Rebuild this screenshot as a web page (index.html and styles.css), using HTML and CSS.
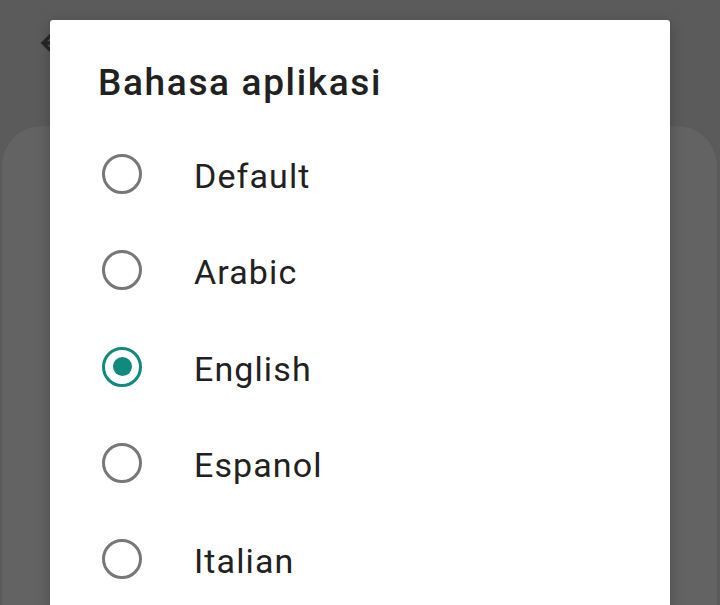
FILE: index.html
```html
<!DOCTYPE html>
<html lang="id">
<head>
<meta charset="utf-8">
<title>Bahasa aplikasi</title>
<link rel="stylesheet" href="styles.css">
</head>
<body>
<div class="screen">
  <div class="appbar">
    <svg class="back" width="40" height="40" viewBox="0 0 24 24"><path d="M20 11H7.83l5.59-5.59L12 4l-8 8 8 8 1.41-1.41L7.83 13H20v-2z" fill="#262626"/></svg>
  </div>
  <div class="card"></div>
</div>
<div class="dialog">
  <h1 class="title">Bahasa aplikasi</h1>
  <ul class="options">
    <li class="option"><span class="radio"></span><span class="label">Default</span></li>
    <li class="option"><span class="radio"></span><span class="label">Arabic</span></li>
    <li class="option"><span class="radio checked"></span><span class="label">English</span></li>
    <li class="option"><span class="radio"></span><span class="label">Espanol</span></li>
    <li class="option"><span class="radio"></span><span class="label">Italian</span></li>
  </ul>
</div>
</body>
</html>
```
FILE: styles.css
```css
html, body {
  margin: 0;
  padding: 0;
  width: 720px;
  height: 605px;
  overflow: hidden;
  background: #5b5b5b;
  font-family: Roboto, "Noto Sans", sans-serif;
}
.screen {
  display: flex;
  flex-direction: column;
  height: 605px;
}
.appbar {
  height: 125px;
  padding-left: 34px;
  padding-top: 23px;
  box-sizing: border-box;
}
.back {
  display: block;
}
.card {
  flex: 1;
  margin: 0 2px 0 1px;
  background: #636363;
  border: 1px solid #595959;
  border-bottom: none;
  border-radius: 40px 40px 0 0;
}
.dialog {
  position: absolute;
  left: 50px;
  top: 20px;
  width: 620px;
  height: 585px;
  overflow: hidden;
  background: #ffffff;
  border-radius: 3px 3px 0 0;
  box-shadow: 0 4px 14px rgba(0, 0, 0, 0.25);
  padding: 39px 0 0 48px;
  box-sizing: border-box;
}
.title {
  margin: 0;
  font-size: 37px;
  line-height: 48px;
  font-weight: 500;
  color: #212121;
  letter-spacing: 1.65px;
}
.options {
  list-style: none;
  margin: 19px 0 0 0;
  padding: 0;
}
.option {
  height: 96.25px;
  display: flex;
  align-items: center;
  padding-left: 4px;
}
.radio {
  width: 40px;
  height: 40px;
  box-sizing: border-box;
  border: 3.6px solid #777777;
  border-radius: 50%;
  display: flex;
  align-items: center;
  justify-content: center;
  flex: none;
}
.radio.checked {
  border-color: #108a7c;
}
.radio.checked::after {
  content: "";
  width: 19px;
  height: 19px;
  border-radius: 50%;
  background: #108a7c;
}
.label {
  margin-left: 52px;
  font-size: 34px;
  color: #212121;
  line-height: 40px;
  padding-top: 4px;
  letter-spacing: 1.1px;
}
```
